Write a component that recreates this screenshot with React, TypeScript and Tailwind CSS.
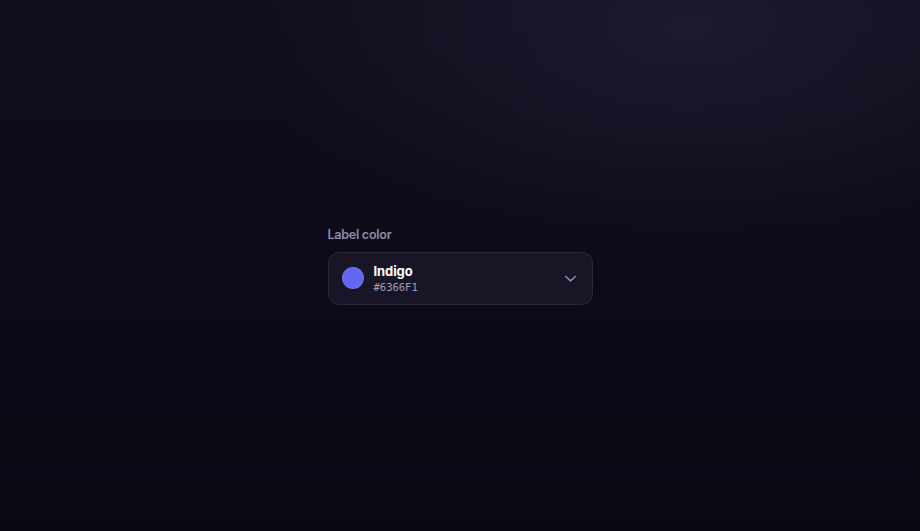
import React from 'react';

const Chevron = () => (
  <svg width="19" height="19" viewBox="0 0 24 24" fill="none" stroke="currentColor" strokeWidth="2" strokeLinecap="round" strokeLinejoin="round">
    <path d="M6 9.5l6 5.5 6-5.5" />
  </svg>
);

export default function App() {
  return (
    <div
      className="min-h-screen w-full flex items-center justify-center font-['Inter',sans-serif]"
      style={{
        background:
          'radial-gradient(ellipse 70% 60% at 75% 5%, #1b1a2e 0%, rgba(27,26,46,0) 70%), linear-gradient(180deg, #100e1d 0%, #0a0813 100%)',
      }}
    >
      <div className="w-[265px] flex flex-col">
        <label className="text-[12.5px] font-semibold text-[#8f8baa] leading-4 mb-[9px] tracking-[-0.25px]">Label color</label>
        <button className="h-[53px] w-full flex items-center rounded-[11px] border border-[#2a2840] bg-[#181626] pl-[13px] pr-[12px] text-left">
          <span className="w-[22px] h-[22px] rounded-full bg-[#6366f1] border border-[#8385f5]/40 shrink-0" />
          <span className="ml-[10px] flex flex-col flex-1">
            <span className="text-[13px] font-bold text-white leading-[16px] tracking-[-0.1px]">Indigo</span>
            <span className="text-[10.5px] text-[#a09cba] leading-[14px] mt-[1px] font-['DejaVu_Sans_Mono',monospace]">#6366F1</span>
          </span>
          <span className="text-[#8f8bab] flex">
            <Chevron />
          </span>
        </button>
      </div>
    </div>
  );
}
